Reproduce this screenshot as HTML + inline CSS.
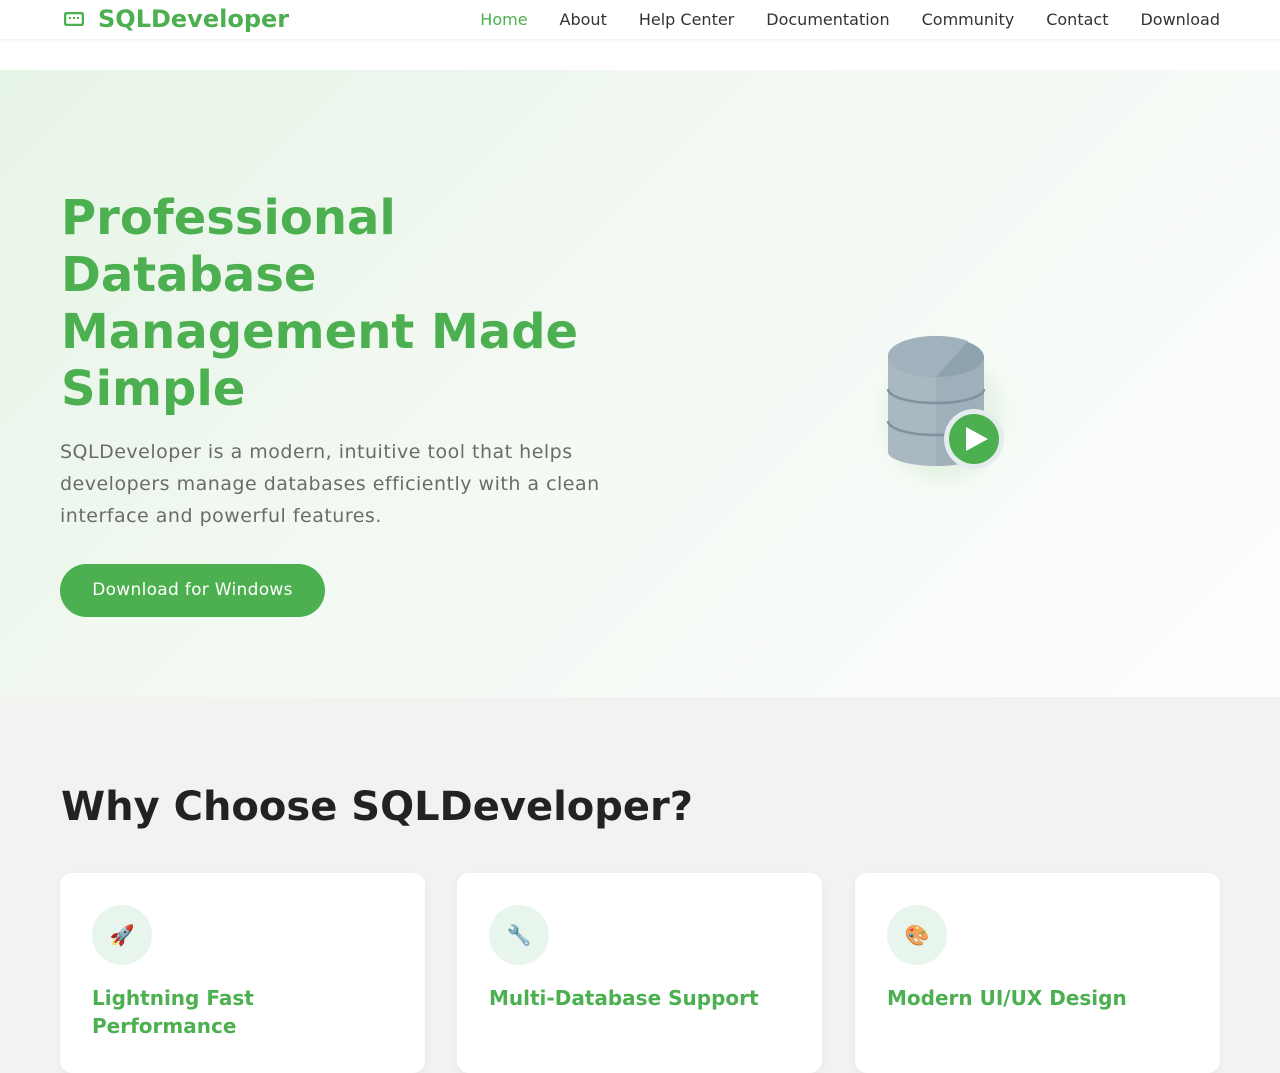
<!DOCTYPE html>
<html><head><meta charset="utf-8"><style>
*{margin:0;padding:0;box-sizing:border-box}
body{width:1280px;height:1024px;overflow:hidden;font-family:"DejaVu Sans","Liberation Sans",sans-serif;background:#f3f2f0;}
header{height:39px;background:#fff;box-shadow:0 1px 3px rgba(0,0,0,.08);position:relative;z-index:2}
.logo{position:absolute;left:64px;top:5px;font-weight:bold;font-size:24px;color:#4caf50;display:flex;align-items:center}
.logo svg{margin-right:14px}
nav{position:absolute;right:60px;top:10px;font-size:16px;color:#333;display:flex;gap:32px}
nav span:first-child{color:#4caf50}
.gap{height:31px;background:#fff}
.hero{height:627px;background:linear-gradient(135deg,#e6f4e6 0%,#f3f9f3 45%,#fdfefd 100%);position:relative}
h1{position:absolute;left:61px;top:120px;font-size:48px;line-height:57px;color:#4caf50;font-weight:bold;width:560px}
.hero p{position:absolute;left:60px;top:366px;width:560px;font-size:19px;line-height:32px;color:#6b6b6b;letter-spacing:0.5px}
.btn{position:absolute;left:60px;top:494px;width:265px;height:53px;border-radius:27px;background:#4caf50;color:#fff;font-size:17px;text-align:center;line-height:53px;letter-spacing:0.3px}
.db{position:absolute;left:868px;top:257px}
h2{position:absolute;left:61px;top:784px;font-size:40px;font-weight:bold;color:#222}
.card{position:absolute;top:873px;width:365px;height:200px;background:#fff;border-radius:12px;box-shadow:0 2px 8px rgba(0,0,0,.05)}
.ic{position:absolute;left:32px;top:32px;width:60px;height:60px;border-radius:50%;background:#e8f5ec;text-align:center;line-height:60px;font-size:20px}
.card h3{position:absolute;left:32px;top:111px;font-size:20px;color:#4caf50;font-weight:bold;line-height:28px}
</style></head><body>
<header>
<div class="logo"><svg width="20" height="14" viewBox="0 0 20 14"><rect x="1" y="1" width="18" height="12" rx="2" fill="none" stroke="#4caf50" stroke-width="2.5"/><rect x="5" y="5" width="2" height="2" fill="#4caf50"/><rect x="9" y="5" width="2" height="2" fill="#4caf50"/><rect x="13" y="5" width="2" height="2" fill="#4caf50"/></svg>SQLDeveloper</div>
<nav><span>Home</span><span>About</span><span>Help Center</span><span>Documentation</span><span>Community</span><span>Contact</span><span>Download</span></nav>
</header>
<div class="gap"></div>
<div class="hero">
<h1>Professional Database Management Made Simple</h1>
<p>SQLDeveloper is a modern, intuitive tool that helps developers manage databases efficiently with a clean interface and powerful features.</p>
<div class="btn">Download for Windows</div>
<svg class="db" width="160" height="170" viewBox="0 0 160 170">
<defs><filter id="s" x="-50%" y="-50%" width="200%" height="200%"><feGaussianBlur stdDeviation="10"/></filter></defs>
<ellipse cx="75" cy="90" rx="60" ry="65" fill="#d8ecd8" filter="url(#s)" opacity=".6"/>
<path d="M20 30 v95 a48 14 0 0 0 96 0 v-95z" fill="#a9b8c1"/>
<path d="M68 44 v95 a48 14 0 0 0 48 -14 v-95z" fill="#9fb0ba"/>
<ellipse cx="68" cy="30" rx="48" ry="20" fill="#8fa3ae"/>
<path d="M68 50 L100 14 A48 20 0 0 0 20 30 A48 20 0 0 0 68 50z" fill="#a1b2bc"/>
<path d="M20 62 a48 14 0 0 0 96 0" fill="none" stroke="#7f929d" stroke-width="2.5"/>
<path d="M20 94 a48 14 0 0 0 96 0" fill="none" stroke="#7f929d" stroke-width="2.5"/>
<circle cx="106" cy="112" r="30" fill="#e4ecee"/>
<circle cx="106" cy="112" r="25" fill="#4caf50"/>
<path d="M98 100 L120 112 L98 124z" fill="#fff"/>
</svg>
</div>
<h2>Why Choose SQLDeveloper?</h2>
<div class="card" style="left:60px"><div class="ic">🚀</div><h3>Lightning Fast<br>Performance</h3></div>
<div class="card" style="left:457px"><div class="ic">🔧</div><h3>Multi-Database Support</h3></div>
<div class="card" style="left:855px"><div class="ic">🎨</div><h3>Modern UI/UX Design</h3></div>
</body></html>
